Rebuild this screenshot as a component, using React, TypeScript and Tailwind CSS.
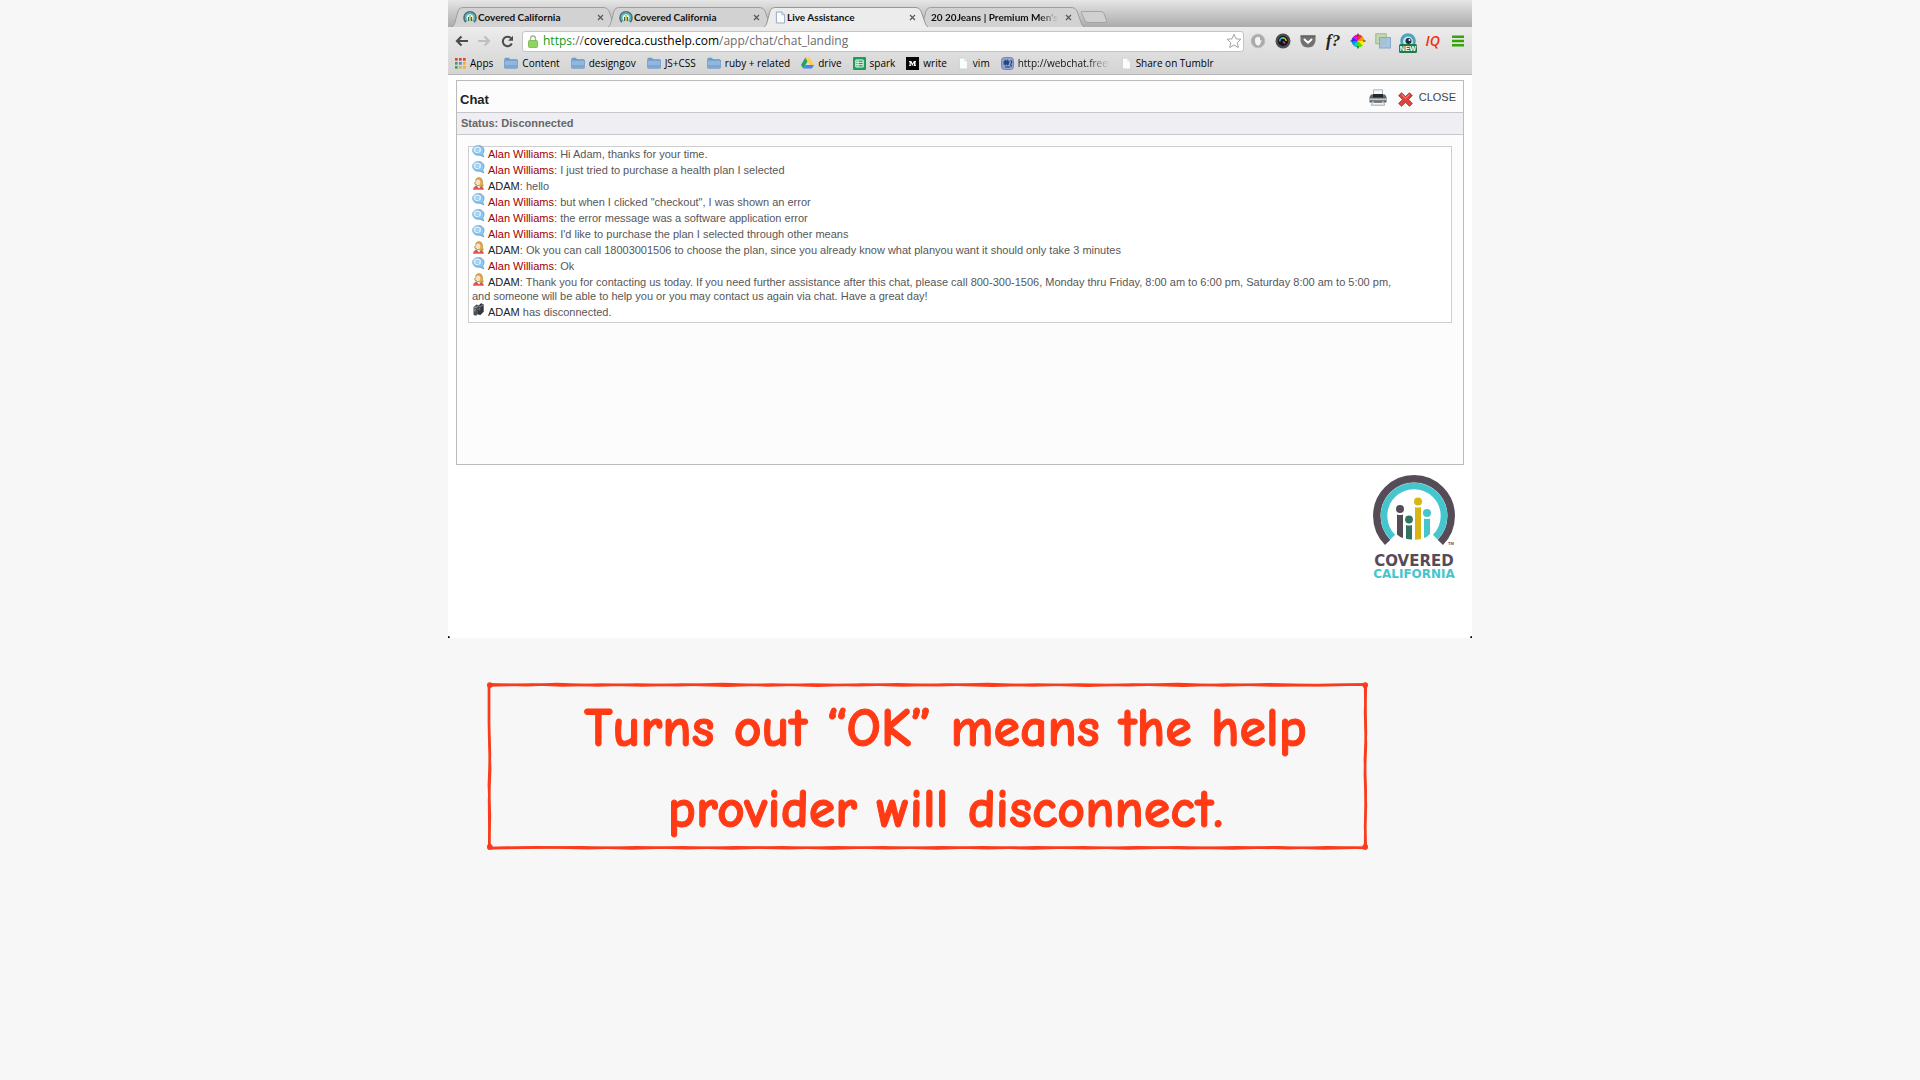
import React from "react";

function CoveredFavicon() {
  return (
    <svg viewBox="0 0 14 14" className="size-[14px] shrink-0" aria-hidden="true">
      <path d="M3 12.2A6 6 0 1 1 11 12.2" fill="none" stroke="#4f6a70" strokeWidth="1.6" />
      <path d="M4.3 11A4.3 4.3 0 1 1 9.7 11" fill="#eef8f4" stroke="#3fb6bd" strokeWidth="1.6" />
      <path d="M5.6 7v4M8.6 7v4" stroke="#3c5c54" strokeWidth="1.1" />
      <path d="M7.1 5v6" stroke="#a8b52c" strokeWidth="1.3" />
    </svg>
  );
}

function PageIcon({ tone = "#8fa3b8" }: { tone?: string }) {
  return (
    <svg viewBox="0 0 12 14" className="h-[13px] w-[11px] shrink-0" aria-hidden="true">
      <path d="M1.5 1h6l3 3v9h-9z" fill="#fbfcfe" stroke={tone} />
      <path d="M7.5 1v3h3" fill="#e6edf5" stroke={tone} strokeWidth="0.8" />
    </svg>
  );
}

function FolderIcon() {
  return (
    <svg viewBox="0 0 14 12" className="h-[12px] w-[14px] shrink-0" aria-hidden="true">
      <path d="M.5 2Q.5.8 1.6.8H5l1 1.4h6.4q1 0 1 1V5H.5z" fill="#6f9cc9" />
      <path d="M.5 3.2h13v7.3q0 .8-.8.8H1.3q-.8 0-.8-.8z" fill="#8fb8dd" stroke="#6c95c0" strokeWidth="0.7" />
      <path d="M1 8h12v2.8H1z" fill="#7aa8d3" />
    </svg>
  );
}

function AppsIcon() {
  const colors = ["#d8483b", "#d8483b", "#d8483b", "#3aa55a", "#4a85e0", "#e9b22b", "#3aa55a", "#e9b22b", "#e9b22b"];
  return (
    <svg viewBox="0 0 11 11" className="size-[11px] shrink-0" aria-hidden="true">
      {colors.map((c, i) => (
        <rect key={i} x={(i % 3) * 4} y={Math.floor(i / 3) * 4} width="2.7" height="2.7" fill={c} />
      ))}
    </svg>
  );
}

function DriveIcon() {
  return (
    <svg viewBox="0 0 13 12" className="h-[12px] w-[13px] shrink-0" aria-hidden="true">
      <path d="M4.4.5 0 8l2.2 3.6L6.6 4.2z" fill="#1fa463" />
      <path d="M4.4.5h4.2L13 8H8.7z" fill="#ffcf48" />
      <path d="M4.4 8H13l-2.2 3.6H2.2z" fill="#4587f0" />
    </svg>
  );
}

function SheetIcon() {
  return (
    <svg viewBox="0 0 13 13" className="size-[13px] shrink-0" aria-hidden="true">
      <rect width="13" height="13" rx="1" fill="#1b9e5a" />
      <path d="M2.8 3h7.4v7H2.8z M2.8 5.3h7.4 M2.8 7.7h7.4 M5 3v7" fill="none" stroke="#e9f8ef" strokeWidth="1" />
    </svg>
  );
}

function MediumIcon() {
  return (
    <svg viewBox="0 0 13 13" className="size-[13px] shrink-0" aria-hidden="true">
      <rect width="13" height="13" fill="#060606" />
      <path d="M3 4h2.3l1.3 2.6L7.9 4H10v.8l-.5.3v3l.5.4V9H7.5v-.5l.5-.4V5.8L6.4 9 4.7 5.8v2.3l.6.4V9H3v-.5l.6-.4v-3L3 4.8z" fill="#fff" />
    </svg>
  );
}

function FreenodeIcon() {
  return (
    <svg viewBox="0 0 13 13" className="size-[13px] shrink-0" aria-hidden="true">
      <rect x=".5" y=".5" width="12" height="12" rx="3" fill="#8ca6d6" stroke="#6d86bb" />
      <path d="M3 3.5h5v4H3z" fill="#35508f" />
      <path d="M2 5h7M2 7h6M4.5 2.5v6M6.5 2.5v6" stroke="#27407c" strokeWidth="0.8" />
      <path d="M9.5 3.5q2 .7.8 2.5t.2 3.8M4 10h5" fill="none" stroke="#223668" strokeWidth="1.1" />
    </svg>
  );
}

type TabProps = { title: string; icon?: React.ReactNode; active?: boolean; fade?: boolean };

function Tab({ title, icon, active, fade }: TabProps) {
  return (
    <div role="tab" aria-selected={!!active} className={active ? "relative z-10 -mr-2 flex h-5 w-[164px] items-center pl-[11px] pr-[11px]" : "relative -mr-2 flex h-5 w-[164px] items-center pl-[11px] pr-[11px]"}>
      <svg viewBox="0 0 164 20" preserveAspectRatio="none" className="absolute inset-0 size-full" aria-hidden="true">
        <path
          d="M0 20Q2 19 3 15.500L6 4Q7 .5 10.500.5H152Q155.500.5 157 4L161 15.500Q162 19 164 20z"
          fill={active ? "#ececec" : "#d2d2d2"}
        />
        <path
          d="M0 20Q2 19 3 15.500L6 4Q7 .5 10.500.5H152Q155.500.5 157 4L161 15.500Q162 19 164 20"
          fill="none"
          stroke={active ? "#8f8f8f" : "#999"}
          strokeWidth="0.9"
        />
      </svg>
      <a href="#tab" className={fade ? "relative flex min-w-0 flex-1 items-center gap-px overflow-hidden whitespace-nowrap bg-linear-to-r from-[#111] from-85% to-transparent bg-clip-text text-transparent" : "relative flex min-w-0 flex-1 items-center gap-px overflow-hidden whitespace-nowrap text-[#111]"}>
        {icon}
        <span>{title}</span>
      </a>
      <button type="button" aria-label={"Close " + title} className="relative ml-1.5 flex size-[9px] shrink-0 items-center justify-center">
        <svg viewBox="0 0 7 7" className="size-[7px]" aria-hidden="true">
          <path d="M1 1l5 5M6 1L1 6" stroke="#555" strokeWidth="1.1" />
        </svg>
      </button>
    </div>
  );
}

function TabStrip() {
  return (
    <div role="tablist" aria-label="Tabs" className="flex h-[27px] items-end bg-linear-to-b from-[#e6e6e6] to-[#ababab] pl-1 font-[Lato,sans-serif] text-[10px] font-bold">
      <Tab title="Covered California" icon={<CoveredFavicon />} />
      <Tab title="Covered California" icon={<CoveredFavicon />} />
      <Tab title="Live Assistance" icon={<PageIcon />} active />
      <Tab title="20 20Jeans | Premium Men's J" fade />
      <button type="button" aria-label="New tab" className="mb-1 ml-1 h-3 w-7">
        <svg viewBox="0 0 28 12" className="size-full" aria-hidden="true">
          <path d="M2 .5H21Q23 .5 24 2.500L26.500 9.500Q27 11.500 25 11.500H8Q6 11.500 5 9.500L1.500 2Q1 .5 2 .5z" fill="#d0d0d0" stroke="#999" strokeWidth="0.8" />
        </svg>
      </button>
    </div>
  );
}

function BackIcon({ color }: { color: string }) {
  return (
    <svg viewBox="0 0 14 12" className="h-3 w-3.5" aria-hidden="true">
      <path d="M13 6H2.500M6.500 1.500L2 6l4.500 4.500" fill="none" stroke={color} strokeWidth="2.2" />
    </svg>
  );
}

const extensions: { label: string; icon: React.ReactNode }[] = [
  {
    label: "Blocker",
    icon: (
      <svg viewBox="0 0 16 16" className="size-4">
        <circle cx="8" cy="8" r="6.800" fill="#aaa" stroke="#bdbdbd" />
        <path d="M5 8V5.500q.7-.8 1.200 0V4.300q.7-.8 1.300 0V3.800q.7-.8 1.300 0v.7q.7-.6 1.200 0V8l.9-.9q.9-.3.700.6L9.900 11.500q-.4.900-1.500.9-2.400 0-2.900-1.600z" fill="#f4f4f4" />
      </svg>
    ),
  },
  {
    label: "Screen capture",
    icon: (
      <svg viewBox="0 0 16 16" className="size-4">
        <circle cx="8" cy="8" r="7.500" fill="#4a4d50" />
        <circle cx="8" cy="8" r="5" fill="#141416" />
        <path d="M4.800 8.500A3.300 3.300 0 0 1 7 5" fill="none" stroke="#3aa0e0" strokeWidth="1.600" />
        <path d="M6.500 5.200A3.300 3.300 0 0 1 10 5.600" fill="none" stroke="#7bd33c" strokeWidth="1.600" />
        <path d="M9.800 5.500A3.300 3.300 0 0 1 11.200 8" fill="none" stroke="#f0c030" strokeWidth="1.500" />
        <path d="M8 8.500l2 2" stroke="#c445b8" strokeWidth="1.500" />
      </svg>
    ),
  },
  {
    label: "Pocket",
    icon: (
      <svg viewBox="0 0 16 16" className="size-4">
        <path d="M.5 2.500h15V7.500Q15 14 8 14.500 1 14 .5 7.500z" fill="#717171" />
        <path d="M.5 3h15" stroke="#555" />
        <path d="M4.500 6.500L8 9.800l3.500-3.300" fill="none" stroke="#fff" strokeWidth="1.900" strokeLinecap="round" strokeLinejoin="round" />
      </svg>
    ),
  },
  { label: "Font finder", icon: <span className="font-[Liberation_Serif,serif] text-[17px] font-bold italic leading-4 text-[#222]">f?</span> },
  {
    label: "Color picker",
    icon: (
      <svg viewBox="0 0 16 16" className="size-4">
        {["#ff2b2b", "#ff9d00", "#f7f300", "#56e000", "#00d8a8", "#0090ff", "#4b2bff", "#f000d0"].map((c, i) => (
          <path key={c} d="M8 8L8 1.500A6.500 6.500 0 0 1 12.600 3.400z" fill={c} transform={`rotate(${i * 45} 8 8)`} />
        ))}
        <path d="M8 .5v2.500M8 13v2.500M.5 8h2.500M13 8h2.500" stroke="#222" strokeWidth="1" />
      </svg>
    ),
  },
  {
    label: "Window resizer",
    icon: (
      <svg viewBox="0 0 16 16" className="size-4">
        <rect x=".8" y=".8" width="10.400" height="10" fill="#c3d9ad" stroke="#9cba84" />
        <rect x="4.500" y="4.500" width="11" height="10.500" fill="#9fbfdc" fillOpacity=".85" stroke="#86a8cc" />
      </svg>
    ),
  },
  {
    label: "Awesome screenshot, new",
    icon: (
      <svg viewBox="0 0 18 20" className="mt-1 h-5 w-[18px]">
        <circle cx="9" cy="8" r="7.800" fill="#4fa3bb" />
        <circle cx="9" cy="8.500" r="5" fill="#c9e4ee" />
        <circle cx="9.500" cy="8" r="3" fill="#17303c" />
        <circle cx="10.500" cy="7" r="1" fill="#fff" />
        <rect x="0" y="11" width="18" height="9" rx="1.500" fill="#1f7a4a" />
        <text x="9" y="18.200" textAnchor="middle" fontSize="7" fontWeight="700" fontFamily="Liberation Sans, sans-serif" fill="#fff">NEW</text>
      </svg>
    ),
  },
  { label: "IQ", icon: <span className="font-[Open_Sans,sans-serif] text-sm font-semibold italic leading-4 text-[#f03010]">IQ</span> },
  {
    label: "Menu",
    icon: (
      <svg viewBox="0 0 14 12" className="h-3 w-3.5">
        <path d="M1 1.800h12M1 6h12M1 10.200h12" stroke="#35a506" strokeWidth="2.400" />
      </svg>
    ),
  },
];

function Toolbar() {
  return (
    <div className="flex h-[26px] items-center">
      <button type="button" aria-label="Back" className="ml-[7px]"><BackIcon color="#4c4c4c" /></button>
      <button type="button" aria-label="Forward" className="ml-2 rotate-180"><BackIcon color="#bfbfbf" /></button>
      <button type="button" aria-label="Reload" className="ml-2.5">
        <svg viewBox="0 0 13 13" className="size-[13px]" aria-hidden="true">
          <path d="M10.800 8.500A4.700 4.700 0 1 1 10 3.300" fill="none" stroke="#4c4c4c" strokeWidth="2" />
          <path d="M12 .8V5.800H7z" fill="#4c4c4c" />
        </svg>
      </button>
      <div className="relative ml-2 flex h-[21px] min-w-0 flex-1 items-center rounded-[3px] border border-[#c4c4c4] bg-white pr-px pl-[5px]">
        <svg viewBox="0 0 10 13" className="h-[13px] w-2.5 shrink-0" aria-hidden="true">
          <path d="M2.500 6V3.500a2.500 2.500 0 0 1 5 0V6" fill="none" stroke="#a3b49a" strokeWidth="1.300" />
          <rect x=".5" y="5.500" width="9" height="7" rx="1" fill="#8fd45f" stroke="#6fb545" strokeWidth="0.800" />
        </svg>
        <input type="url" aria-label="Address" aria-describedby="address" className="absolute inset-0 w-full rounded-[3px] bg-transparent" />
        <span id="address" className="pointer-events-none ml-[5px] flex-1 whitespace-nowrap text-xs text-[#6b6b6b]">
          <span className="text-[#149a14]">https</span>://<span className="text-black">coveredca.custhelp.com</span>/app/chat/chat_landing
        </span>
        <button type="button" aria-label="Bookmark this page" className="relative">
          <svg viewBox="0 0 16 16" className="size-4" aria-hidden="true">
            <path d="M8 1.300l2 4.500 4.900.5-3.700 3.300 1.100 4.900L8 12l-4.300 2.500 1.100-4.900L1.100 6.300 6 5.800z" fill="#fff" stroke="#999" strokeWidth="0.900" />
          </svg>
        </button>
      </div>
      <div className="mr-0.5 ml-0.5 grid w-[224px] grid-cols-9">
        {extensions.map((e) => (
          <button key={e.label} type="button" aria-label={e.label} className="flex h-5 items-center justify-center">{e.icon}</button>
        ))}
      </div>
    </div>
  );
}

const bookmarks: { label: string; icon: React.ReactNode; fade?: boolean }[] = [
  { label: "Apps", icon: <AppsIcon /> },
  { label: "Content", icon: <FolderIcon /> },
  { label: "designgov", icon: <FolderIcon /> },
  { label: "JS+CSS", icon: <FolderIcon /> },
  { label: "ruby + related", icon: <FolderIcon /> },
  { label: "drive", icon: <DriveIcon /> },
  { label: "spark", icon: <SheetIcon /> },
  { label: "write", icon: <MediumIcon /> },
  { label: "vim", icon: <PageIcon tone="#cfcfcf" /> },
  { label: "http://webchat.freenode", icon: <FreenodeIcon />, fade: true },
  { label: "Share on Tumblr", icon: <PageIcon tone="#cfcfcf" /> },
];

function BookmarksBar() {
  return (
    <nav aria-label="Bookmarks" className="flex h-[21px] items-center gap-[11px] border-b border-[#b5b5b5] pb-0.5 pl-[7px] text-[10px] text-black">
      {bookmarks.map((b) => (
        <a key={b.label} href="#bookmark" className="flex shrink-0 items-center gap-1 whitespace-nowrap">
          {b.icon}
          <span className={b.fade ? "w-[92px] overflow-hidden bg-linear-to-r from-[#111] from-75% to-transparent bg-clip-text text-transparent" : ""}>{b.label}</span>
        </a>
      ))}
    </nav>
  );
}

function BubbleIcon() {
  return (
    <svg viewBox="0 0 13 13" className="-my-1 mr-[3px] inline-block size-[13px] align-[4px]" aria-hidden="true">
      <path d="M5.500.7C9 .2 11.800 2 12 5c.1 2-.6 3-1.300 3.800l1 3L8 10.200C4 10.800.8 8.500.7 5.500.6 3 2.500 1 5.500.7z" fill="#8cc5ee" stroke="#5a9fd6" strokeWidth="0.800" />
      <ellipse cx="5.300" cy="4.800" rx="3.800" ry="3.300" fill="#d6edfb" />
      <path d="M3.500 4h4M3.500 6h3.500" stroke="#5fa8dc" strokeWidth="0.800" />
    </svg>
  );
}

function AgentIcon() {
  return (
    <svg viewBox="0 0 13 13" className="-my-1 mr-[3px] inline-block size-[13px] align-[4px]" aria-hidden="true">
      <path d="M1 12.700Q1.500 9 5 8.700h3.500q3 .5 3.300 4z" fill="#e0564e" />
      <path d="M5 9l2 2.500L9 9z" fill="#fff" />
      <path d="M3.500 4.500Q3.500.6 7 .5q3.500.3 3.500 4 0 2 .8 4.500L8 9.300 4 6.500z" fill="#e0a94a" stroke="#a8742a" strokeWidth="0.500" />
      <ellipse cx="6" cy="5.300" rx="2.300" ry="2.900" fill="#fbe0bd" />
      <path d="M2.500 5.500q.3 3 3 3" fill="none" stroke="#8a5a34" strokeWidth="0.800" />
    </svg>
  );
}

function ServerIcon() {
  return (
    <svg viewBox="0 0 13 13" className="-my-1 mr-[3px] inline-block size-[13px] align-[4px]" aria-hidden="true">
      <path d="M1.500 4l3-2.500 2.500.8v8L4 12.700l-2.500-.8z" fill="#4c5258" />
      <path d="M6 3l3-2.700 2.700.9v7.500L8.500 12 6 11.500z" fill="#33373b" />
      <path d="M2 4l2 .6L6.500 2.500M6.500 3l2.200.6L11.500 1.300" fill="none" stroke="#c2c7cb" strokeWidth="0.700" />
      <path d="M2 6l1.800.5M2 7.500l1.800.5M6.500 5l1.800.5M6.500 6.500L8.300 7" stroke="#aeb4b8" strokeWidth="0.600" />
    </svg>
  );
}

const messages: { from: "guest" | "agent"; text: React.ReactNode }[] = [
  { from: "guest", text: "Hi Adam, thanks for your time." },
  { from: "guest", text: "I just tried to purchase a health plan I selected" },
  { from: "agent", text: "hello" },
  { from: "guest", text: 'but when I clicked "checkout", I was shown an error' },
  { from: "guest", text: "the error message was a software application error" },
  { from: "guest", text: "I'd like to purchase the plan I selected through other means" },
  { from: "agent", text: "Ok you can call 18003001506 to choose the plan, since you already know what planyou want it should only take 3 minutes" },
  { from: "guest", text: "Ok" },
  {
    from: "agent",
    text: (
      <>
        Thank you for contacting us today. If you need further assistance after this chat, please call 800-300-1506, Monday thru Friday, 8:00 am to 6:00 pm, Saturday 8:00 am to 5:00 pm,
        <br />
        and someone will be able to help you or you may contact us again via chat. Have a great day!
      </>
    ),
  },
];

function ChatPanel() {
  return (
    <section className="border border-[#bbb] bg-[#fcfcfc] font-[Liberation_Sans,Arial,sans-serif] text-[#575757]">
      <header className="flex h-[31px] items-center pt-0.5 pr-[7px] pl-[3px]">
        <h1 className="mt-1 flex-1 text-[13px] font-bold text-[#222]">Chat</h1>
        <button type="button" aria-label="Print" className="mr-[11px]">
          <svg viewBox="0 0 18 17" className="h-[17px] w-[18px]" aria-hidden="true">
            <path d="M4.500.8h9V7h-9z" fill="#f2f7fb" stroke="#9aa2a8" strokeWidth="0.800" />
            <path d="M2 5.500h14L17.500 8v5.500H.5V8z" fill="#5f6468" />
            <path d="M4 5h10v3.500H4z" fill="#24282b" />
            <path d="M.8 9.500h16.400v1.700H.8z" fill="#c6ccd0" />
            <path d="M3.500 12h11l1 4.200h-13z" fill="#f4f6f7" stroke="#8d9499" strokeWidth="0.800" />
            <path d="M4.500 13h9" stroke="#333" strokeWidth="1.200" />
          </svg>
        </button>
        <button type="button" className="flex items-center gap-1.5 text-[11px] text-[#444]">
          <svg viewBox="0 0 15 15" className="mt-1 size-[15px]" aria-hidden="true">
            <path d="M3.500.8L7.500 4.500 11.500.8l2.800 2.800-3.800 3.900 3.800 4-2.800 2.800-4-3.900-4 3.900-2.800-2.800 3.800-4L.7 3.600z" fill="#dc453b" stroke="#9c241d" strokeWidth="0.800" strokeLinejoin="round" />
            <path d="M3.500 2.300l4 3.900 4-3.900" fill="none" stroke="#f09a90" strokeWidth="1" />
          </svg>
          CLOSE
        </button>
      </header>
      <p className="flex h-[23px] items-center border-y border-[#c6c6cb] bg-[#eeeef3] pl-1 text-[11px] font-bold text-[#666]">Status: Disconnected</p>
      <div className="min-h-[329px] px-[11px] pt-[11px]">
        <ol className="flex flex-col gap-0.5 border border-[#cfcfcf] bg-white pb-[3px] pl-[3px] text-[11px] leading-[14px]">
          {messages.map((m, i) => (
            <li key={i}>
              {m.from === "guest" ? <BubbleIcon /> : <AgentIcon />}
              <span className={m.from === "guest" ? "text-[#a00000]" : "text-[#222]"}>{m.from === "guest" ? "Alan Williams" : "ADAM"}</span>: {m.text}
            </li>
          ))}
          <li>
            <ServerIcon />
            <span className="text-[#222]">ADAM</span> has disconnected.
          </li>
        </ol>
      </div>
    </section>
  );
}

function CoveredLogo() {
  return (
    <div className="mt-2.5 mr-2 ml-auto flex w-[84px] flex-col items-center font-[DejaVu_Sans,sans-serif] font-bold">
      <svg viewBox="0 0 84 74" className="h-[74px] w-[84px]" aria-label="Covered California logo" role="img">
        <path d="M15.700 67.300A37.200 37.200 0 1 1 68.300 67.300" fill="none" stroke="#564c57" strokeWidth="7.500" />
        <path d="M20.800 62.200A30 30 0 1 1 63.200 62.200" fill="none" stroke="#45c5cd" strokeWidth="6.600" />
        <g>
          <circle cx="28" cy="34" r="4" fill="#564c57" />
          <path d="M25 39.500q3 1 6 0V63q-3.500-1-6-3.500z" fill="#564c57" />
          <circle cx="37" cy="44.500" r="3.900" fill="#2f7561" />
          <path d="M34 50q3 1 6 0v14.500q-3.500 0-6-.8z" fill="#2f7561" />
          <circle cx="46" cy="26.500" r="4" fill="#d9b613" />
          <path d="M43 32q3 1 6 0v32q-3 .8-6 .8z" fill="#d9b613" />
          <circle cx="55" cy="38" r="4" fill="#45c5cd" />
          <path d="M52 43.500q3 1 6 0V59q-2.500 3-6 4z" fill="#45c5cd" />
        </g>
        <text x="76" y="70" fontSize="4" fontFamily="Liberation Sans, sans-serif" fill="#564c57">TM</text>
      </svg>
      <span className="mt-1.5 text-[15px] leading-[13px] text-[#564c57]">COVERED</span>
      <span className="text-xs leading-[13px] text-[#45c5cd]">CALIFORNIA</span>
    </div>
  );
}

function Callout() {
  return (
    <div className="relative mt-11 mr-[104px] ml-[39px] pt-1.5 pl-9 text-center">
      <svg viewBox="0 0 880 163" preserveAspectRatio="none" className="absolute inset-0 size-full" aria-hidden="true">
        <g fill="none" stroke="#fa3c1c" strokeWidth="2.400" strokeLinecap="round" strokeLinejoin="round">
          <path d="M2 2.200L40 3.200 70 2 110 3.300 150 2.300 190 3.200 235 2 280 3.300 325 2.300 370 3.200 410 2.200 450 3.200 500 2 545 3.300 590 2.300 640 3.200 690 2 735 3.300 780 2.200 830 3.200 878 2.500 877 30 878 60 876.800 90 878 120 877 140 878 161 840 160.200 800 161.300 750 160.300 700 161.200 650 160.200 600 161.300 550 160.300 500 161.200 455 160.200 400 161.300 350 160.200 300 161.300 250 160.200 200 161.300 150 160.200 100 161.300 50 160.200 2 161 3 130 1.800 100 3 70 2 40z" />
          <path d="M2 3.500L45 2.300 75 3.500 115 2.400 155 3.500 195 2.400 240 3.600 285 2.300 330 3.600 375 2.300 415 3.500 460 2.400 505 3.600 550 2.300 600 3.600 645 2.300 695 3.600 740 2.300 790 3.500 877 2.400 878 50 876.800 75 877.800 105 877 160.500 835 161.500 790 160.200 745 161.500 690 160.300 640 161.500 595 160.200 545 161.500 495 160.200 450 161.500 395 160.200 345 161.500 295 160.200 245 161.500 195 160.200 145 161.500 95 160.200 2.500 161.200 2 115 3.200 85 2 50z" />
        </g>
        <g fill="#fa3c1c">
          <circle cx="2.800" cy="3" r="2.800" />
          <circle cx="877.200" cy="3" r="2.800" />
          <circle cx="2.800" cy="160" r="2.800" />
          <circle cx="877.200" cy="160" r="2.800" />
        </g>
      </svg>
      <p className="relative -mb-1.5 font-['Comic_Sans_MS','Comic_Neue','Open_Sans',sans-serif] text-[54px] leading-[81px] font-bold text-[#ff3a14] [-webkit-text-stroke:1px_#ff3a14]">
        Turns out “OK” means the help
        <br />
        provider will disconnect.
      </p>
    </div>
  );
}

export default function App() {
  return (
    <main className="min-h-screen bg-[#f7f7f7]">
      <div className="mx-auto w-full max-w-[1024px]">
        <div className="relative min-h-[638px] bg-white font-['Lucida_Grande','Open_Sans',sans-serif]">
          <TabStrip />
          <div className="bg-linear-to-b from-[#ececec] to-[#d3d3d3] pt-px">
            <Toolbar />
            <BookmarksBar />
          </div>
          <div className="px-2 pt-[5px]">
            <ChatPanel />
            <CoveredLogo />
          </div>
          <span className="absolute bottom-0 left-0 size-[2px] rounded-tr-full bg-black" />
          <span className="absolute right-0 bottom-0 size-[2px] rounded-tl-full bg-black" />
        </div>
        <Callout />
      </div>
    </main>
  );
}
